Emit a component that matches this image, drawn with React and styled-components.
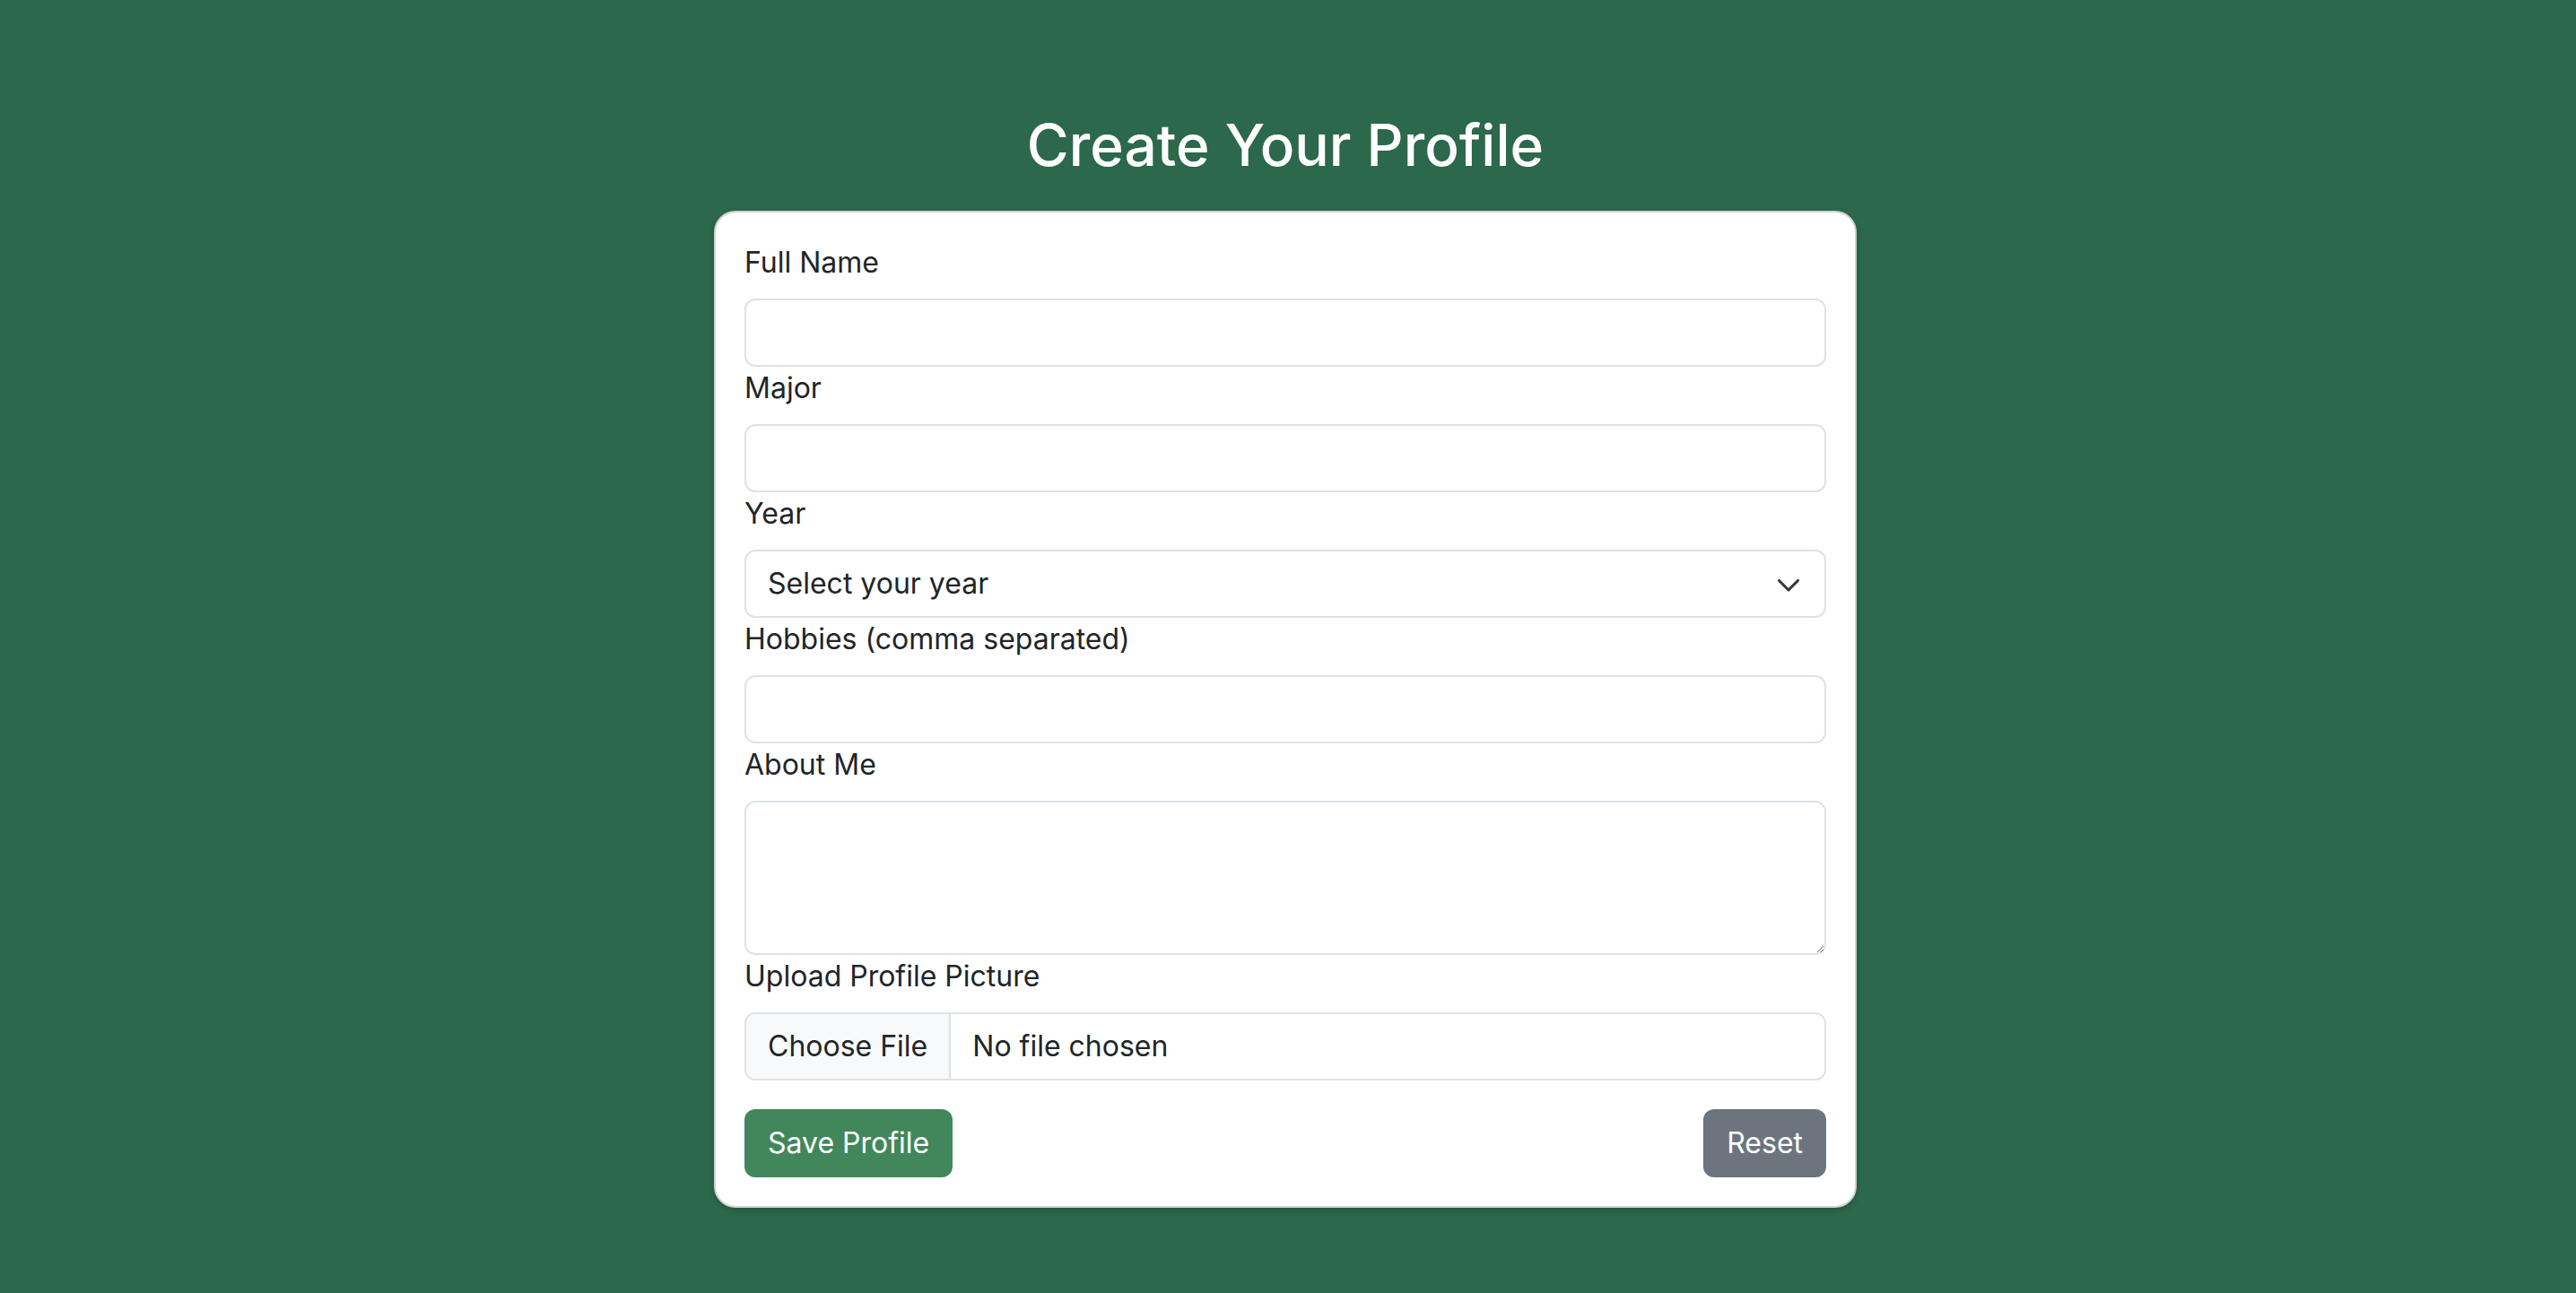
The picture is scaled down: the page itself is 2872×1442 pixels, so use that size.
import React, { useState } from "react";
import styled, { createGlobalStyle } from "styled-components";

const GlobalStyle = createGlobalStyle`
  * {
    box-sizing: border-box;
  }
  body {
    margin: 0;
    background-color: #2c684b;
    font-family: "Inter", "Noto Sans", sans-serif;
    color: #212529;
  }
`;

const years = ["Freshman", "Sophomore", "Junior", "Senior", "Graduate"];

const emptyProfile = {
  name: "",
  major: "",
  year: "",
  hobbies: "",
  about: "",
};

const App = () => {
  const [profile, setProfile] = useState(emptyProfile);

  const update = (field) => (e) =>
    setProfile((prev) => ({ ...prev, [field]: e.target.value }));

  const handleSubmit = (e) => {
    e.preventDefault();
    console.log("Saved profile:", profile);
  };

  return (
    <>
      <GlobalStyle />
      <Page>
        <Title>Create Your Profile</Title>
        <Card onSubmit={handleSubmit}>
          <Label htmlFor="name">Full Name</Label>
          <Input id="name" value={profile.name} onChange={update("name")} />

          <Label htmlFor="major">Major</Label>
          <Input id="major" value={profile.major} onChange={update("major")} />

          <Label htmlFor="year">Year</Label>
          <SelectWrap>
            <Select id="year" value={profile.year} onChange={update("year")}>
              <option value="">Select your year</option>
              {years.map((y) => (
                <option key={y} value={y}>
                  {y}
                </option>
              ))}
            </Select>
            <Chevron viewBox="0 0 16 12" aria-hidden="true">
              <path
                d="m2 4 6 6 6-6"
                fill="none"
                stroke="#343a40"
                strokeWidth="1.8"
                strokeLinecap="round"
                strokeLinejoin="round"
              />
            </Chevron>
          </SelectWrap>

          <Label htmlFor="hobbies">Hobbies (comma separated)</Label>
          <Input
            id="hobbies"
            value={profile.hobbies}
            onChange={update("hobbies")}
          />

          <Label htmlFor="about">About Me</Label>
          <TextArea
            id="about"
            rows={3}
            value={profile.about}
            onChange={update("about")}
          />

          <Label htmlFor="picture">Upload Profile Picture</Label>
          <FileInput id="picture" type="file" accept="image/*" />

          <ButtonRow>
            <Button type="submit" $variant="primary">
              Save Profile
            </Button>
            <Button
              type="reset"
              $variant="secondary"
              onClick={() => setProfile(emptyProfile)}
            >
              Reset
            </Button>
          </ButtonRow>
        </Card>
      </Page>
    </>
  );
};

const Page = styled.div`
  padding: 124px 6px 40px 0;
  display: flex;
  flex-direction: column;
  align-items: center;
`;

const Title = styled.h2`
  margin: 0 0 34px;
  color: #ffffff;
  font-size: 64px;
  font-weight: 500;
  line-height: 1.2;
  text-align: center;
`;

const Card = styled.form`
  width: 1274px;
  background-color: #ffffff;
  border: 2px solid rgba(0, 0, 0, 0.18);
  border-radius: 24px;
  padding: 32px;
  box-shadow: 0 3px 6px rgba(0, 0, 0, 0.18);
  display: flex;
  flex-direction: column;
`;

const Label = styled.label`
  display: block;
  font-size: 32px;
  line-height: 48px;
  margin-bottom: 16px;
  color: #212529;
`;

const fieldStyles = `
  display: block;
  width: 100%;
  padding: 12px 24px;
  font-family: "Inter", "Noto Sans", sans-serif;
  font-size: 32px;
  line-height: 48px;
  color: #212529;
  background-color: #ffffff;
  border: 2px solid #dee2e6;
  border-radius: 12px;
  outline: none;
`;

const Input = styled.input`
  ${fieldStyles}
  height: 76px;
`;

const SelectWrap = styled.div`
  position: relative;
`;

const Select = styled.select`
  ${fieldStyles}
  height: 76px;
  appearance: none;
  padding-right: 80px;
`;

const Chevron = styled.svg`
  position: absolute;
  right: 28px;
  top: 50%;
  width: 28px;
  height: 21px;
  transform: translateY(-50%);
  pointer-events: none;
`;

const TextArea = styled.textarea`
  ${fieldStyles}
  height: 172px;
  resize: vertical;
`;

const FileInput = styled.input`
  ${fieldStyles}
  height: 76px;
  overflow: hidden;

  &::file-selector-button {
    padding: 12px 24px;
    margin: -12px 24px -12px -24px;
    height: 72px;
    font-family: "Inter", "Noto Sans", sans-serif;
    font-size: 32px;
    line-height: 48px;
    color: #212529;
    background-color: #f8f9fa;
    border: 0 solid #dee2e6;
    border-right-width: 2px;
    border-radius: 0;
  }
`;

const ButtonRow = styled.div`
  display: flex;
  justify-content: space-between;
  margin-top: 32px;
`;

const Button = styled.button`
  padding: 12px 24px;
  font-family: "Inter", "Noto Sans", sans-serif;
  font-size: 32px;
  line-height: 48px;
  color: #ffffff;
  border: 2px solid transparent;
  border-radius: 12px;
  cursor: pointer;
  background-color: ${({ $variant }) =>
    $variant === "primary" ? "#41875b" : "#6c757d"};
  &:hover {
    background-color: ${({ $variant }) =>
      $variant === "primary" ? "#38754f" : "#5c636a"};
  }
`;

export default App;
